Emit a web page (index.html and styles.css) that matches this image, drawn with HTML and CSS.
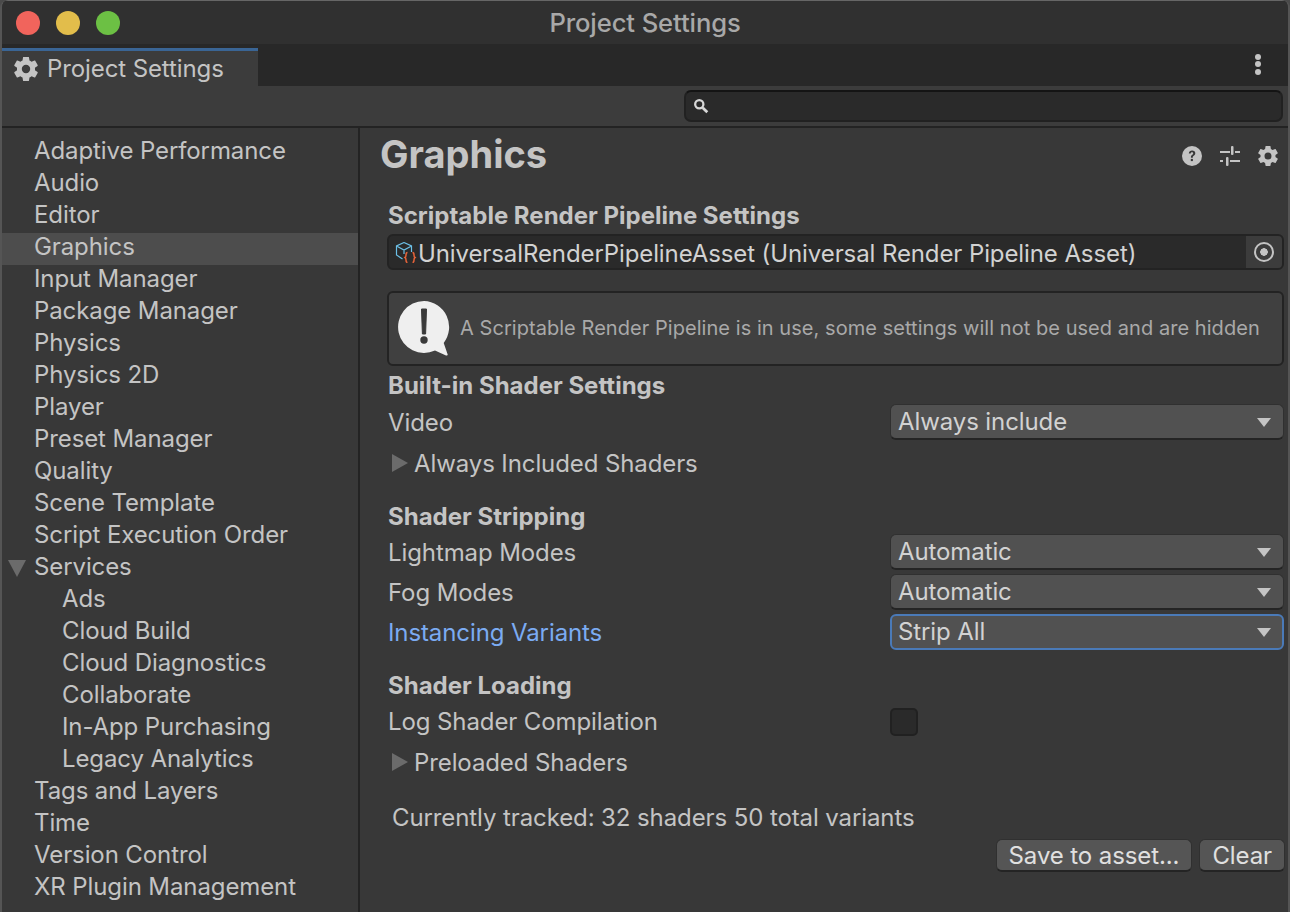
FILE: index.html
```html
<!DOCTYPE html>
<html lang="en">
<head>
  <meta charset="UTF-8" />
  <title>Project Settings</title>
  <link rel="stylesheet" href="styles.css">
</head>
<body>
  <div class="window">
    <div class="titlebar">
      <span class="light red"></span>
      <span class="light yellow"></span>
      <span class="light green"></span>
      <span class="title">Project Settings</span>
    </div>

    <div class="tabstrip">
      <div class="tab">
        <svg class="gear tab-gear" viewBox="2 2 20 20"><path d="M19.400 13c.1-.3.1-.7.1-1s0-.7-.1-1l2.200-1.600c.2-.2.300-.4.100-.7l-2-3.500c-.1-.2-.4-.3-.6-.2l-2.500 1c-.5-.4-1.100-.7-1.700-1l-.4-2.600c0-.3-.2-.4-.5-.4h-4c-.3 0-.5.100-.5.400l-.4 2.600c-.6.300-1.200.6-1.700 1l-2.500-1c-.2-.1-.5 0-.6.200l-2 3.500c-.2.300-.1.500.1.700L4.600 11c-.1.300-.1.700-.1 1s0 .7.100 1l-2.200 1.600c-.2.200-.3.400-.1.700l2 3.500c.1.200.4.300.6.200l2.500-1c.5.400 1.100.7 1.700 1l.4 2.600c0 .3.200.4.500.4h4c.3 0 .5-.1.500-.4l.4-2.600c.6-.3 1.200-.6 1.700-1l2.500 1c.2.100.5 0 .6-.2l2-3.500c.2-.3.100-.5-.1-.7zM12 15.500a3.500 3.500 0 1 1 0-7 3.500 3.500 0 0 1 0 7z"/></svg>
        <span>Project Settings</span>
      </div>
      <div class="kebab"><i></i><i></i><i></i></div>
    </div>

    <div class="toolbar">
      <div class="search">
        <svg class="search-icon" viewBox="0 0 14 14"><circle cx="5.500" cy="5.500" r="3.600" fill="none" stroke="#d8d8d8" stroke-width="2"/><path d="M8.500 8.500l4 4" stroke="#d8d8d8" stroke-width="2.400"/></svg>
      </div>
    </div>

    <div class="main">
      <nav class="sidebar">
        <div class="item">Adaptive Performance</div>
        <div class="item">Audio</div>
        <div class="item">Editor</div>
        <div class="item selected">Graphics</div>
        <div class="item">Input Manager</div>
        <div class="item">Package Manager</div>
        <div class="item">Physics</div>
        <div class="item">Physics 2D</div>
        <div class="item">Player</div>
        <div class="item">Preset Manager</div>
        <div class="item">Quality</div>
        <div class="item">Scene Template</div>
        <div class="item">Script Execution Order</div>
        <div class="item has-arrow"><span class="arrow-down"></span>Services</div>
        <div class="item sub">Ads</div>
        <div class="item sub">Cloud Build</div>
        <div class="item sub">Cloud Diagnostics</div>
        <div class="item sub">Collaborate</div>
        <div class="item sub">In-App Purchasing</div>
        <div class="item sub">Legacy Analytics</div>
        <div class="item">Tags and Layers</div>
        <div class="item">Time</div>
        <div class="item">Version Control</div>
        <div class="item">XR Plugin Management</div>
      </nav>

      <section class="content">
        <header class="page-head">
          <h1>Graphics</h1>
          <div class="head-icons">
            <svg class="head-icon" viewBox="0 0 20 20"><circle cx="10" cy="10" r="10" fill="#c4c4c4"/><path d="M6.800 7.600c.1-2 1.500-3 3.300-3 1.900 0 3.200 1.100 3.200 2.700 0 1.200-.7 1.800-1.500 2.400-.7.500-1 .8-1 1.600v.4H8.900v-.6c0-1.200.5-1.800 1.300-2.400.6-.4 1-.8 1-1.300 0-.7-.5-1.100-1.200-1.100-.8 0-1.200.500-1.300 1.300z" fill="#383838"/><rect x="8.800" y="12.900" width="2.100" height="2.200" fill="#383838"/></svg>
            <svg class="head-icon" viewBox="0 0 20 20" fill="#c4c4c4"><rect x="0" y="5" width="10" height="2"/><rect x="11" y="0" width="2.500" height="9" rx="1"/><rect x="15" y="5" width="5" height="2"/><rect x="0" y="14" width="3" height="2"/><rect x="6" y="11" width="2.500" height="9" rx="1"/><rect x="10" y="14" width="10" height="2"/></svg>
            <svg class="gear head-icon" viewBox="2 2 20 20"><path d="M19.400 13c.1-.3.1-.7.1-1s0-.7-.1-1l2.200-1.600c.2-.2.300-.4.100-.7l-2-3.500c-.1-.2-.4-.3-.6-.2l-2.500 1c-.5-.4-1.100-.7-1.700-1l-.4-2.600c0-.3-.2-.4-.5-.4h-4c-.3 0-.5.100-.5.400l-.4 2.600c-.6.300-1.200.6-1.700 1l-2.500-1c-.2-.1-.5 0-.6.200l-2 3.500c-.2.300-.1.500.1.700L4.600 11c-.1.300-.1.700-.1 1s0 .7.100 1l-2.200 1.600c-.2.200-.3.400-.1.700l2 3.500c.1.200.4.300.6.200l2.500-1c.5.400 1.100.7 1.700 1l.4 2.600c0 .3.200.4.500.4h4c.3 0 .5-.1.500-.4l.4-2.600c.6-.3 1.200-.6 1.700-1l2.500 1c.2.100.5 0 .6-.2l2-3.500c.2-.3.100-.5-.1-.7zM12 15.500a3.500 3.500 0 1 1 0-7 3.500 3.500 0 0 1 0 7z"/></svg>
          </div>
        </header>

        <div class="body">
          <h2 class="heading srp-heading">Scriptable Render Pipeline Settings</h2>
          <div class="object-field">
            <svg class="asset-icon" viewBox="0 0 22 22">
              <path d="M9 1.500l7.500 3.500v6M9 1.500L1.500 5v9l6 4M1.500 5L9 9l7.500-4M9 9v4" fill="none" stroke="#6cc1e8" stroke-width="1.200"/>
              <path d="M12.500 11.500c-1.500 0-1.500.8-1.500 2.500 0 1.500-.2 2-1 2.500.8.500 1 1 1 2.500 0 1.700 0 2.500 1.500 2.500M17.500 11.500c1.500 0 1.500.8 1.500 2.500 0 1.500.2 2 1 2.500-.8.500-1 1-1 2.500 0 1.700 0 2.500-1.500 2.500" fill="none" stroke="#e8643a" stroke-width="1.500"/>
            </svg>
            <span class="object-name">UniversalRenderPipelineAsset (Universal Render Pipeline Asset)</span>
            <span class="object-picker"><i></i></span>
          </div>

          <div class="helpbox">
            <svg class="help-icon" viewBox="0 0 54 58">
              <path d="M27 1a26 26 0 1 0 11 49.600l11 4.900c1.300.4 2-.6 1.500-1.600l-3.800-11A26 26 0 0 0 27 1z" fill="#efefef"/>
              <path d="M24.500 9h5l-.9 25h-3.200z" fill="#3a3a3a" stroke="#3a3a3a" stroke-width="1" stroke-linejoin="round"/>
              <circle cx="27" cy="40" r="3.700" fill="#3a3a3a"/>
            </svg>
            <span class="help-text">A Scriptable Render Pipeline is in use, some settings will not be used and are hidden</span>
          </div>

          <h2 class="heading builtin-heading">Built-in Shader Settings</h2>
          <div class="row">
            <span class="label">Video</span>
            <div class="dropdown">Always include</div>
          </div>
          <div class="row foldout"><span class="arrow-right"></span>Always Included Shaders</div>

          <h2 class="heading stripping-heading">Shader Stripping</h2>
          <div class="row">
            <span class="label">Lightmap Modes</span>
            <div class="dropdown">Automatic</div>
          </div>
          <div class="row">
            <span class="label">Fog Modes</span>
            <div class="dropdown">Automatic</div>
          </div>
          <div class="row">
            <span class="label focused">Instancing Variants</span>
            <div class="dropdown focus">Strip All</div>
          </div>

          <h2 class="heading loading-heading">Shader Loading</h2>
          <div class="row log-row">
            <span class="label">Log Shader Compilation</span>
            <div class="check-cell"><span class="checkbox"></span></div>
          </div>
          <div class="row foldout"><span class="arrow-right"></span>Preloaded Shaders</div>

          <p class="tracked">Currently tracked: 32 shaders 50 total variants</p>
          <div class="actions">
            <button class="btn">Save to asset...</button>
            <button class="btn">Clear</button>
          </div>
        </div>
      </section>
    </div>
  </div>
</body>
</html>
```

FILE: styles.css
```css
html, body {
  margin: 0;
  padding: 0;
  background: #4a4a4a;
}

.window {
  width: 1290px;
  height: 912px;
  overflow: hidden;
  display: flex;
  flex-direction: column;
  box-sizing: border-box;
  border-left: 2px solid #555;
  border-right: 2px solid #555;
  border-radius: 8px 8px 0 0;
  background: #383838;
  color: #c4c4c4;
  font-family: Inter, "Liberation Sans", sans-serif;
  font-size: 24px;
  letter-spacing: -0.1px;
}

/* title bar */
.titlebar {
  height: 44px;
  flex: none;
  display: flex;
  align-items: center;
  padding-left: 14px;
  gap: 16px;
  background: #303030;
  border-top: 1px solid #666;
  box-sizing: border-box;
  position: relative;
}

.light {
  width: 24px;
  height: 24px;
  border-radius: 50%;
}

.red { background: #f1645c; }
.yellow { background: #e2bd4b; }
.green { background: #6cc044; }

.title {
  position: absolute;
  left: 0;
  right: 0;
  text-align: center;
  color: #a8a8a8;
  font-size: 25.6px;
  font-weight: 500;
}

/* tabs */
.tabstrip {
  height: 42px;
  flex: none;
  display: flex;
  justify-content: space-between;
  background: #282828;
}

.tab {
  width: 256px;
  margin-top: 4px;
  box-sizing: border-box;
  border-top: 3px solid #3a6595;
  background: #3c3c3c;
  display: flex;
  align-items: center;
  padding-left: 12px;
  gap: 9px;
  color: #c4c4c4;
}

.gear { fill: #c4c4c4; }

.tab-gear {
  width: 24px;
  height: 24px;
}

.kebab {
  width: 6px;
  margin-right: 27px;
  padding-bottom: 2px;
  display: flex;
  flex-direction: column;
  justify-content: center;
  gap: 1.5px;
}

.kebab i {
  width: 6px;
  height: 6px;
  border-radius: 50%;
  background: #c4c4c4;
}

/* toolbar */
.toolbar {
  height: 42px;
  flex: none;
  box-sizing: border-box;
  background: #3c3c3c;
  border-bottom: 2px solid #232323;
  padding: 4px 5px 4px 682px;
}

.search {
  height: 32px;
  box-sizing: border-box;
  background: #2a2a2a;
  border: 2px solid #212121;
  border-top-color: #141414;
  border-radius: 7px;
  display: flex;
  align-items: center;
  padding-left: 7px;
}

.search-icon {
  width: 16px;
  height: 16px;
}

/* main split */
.main {
  flex: 1;
  display: flex;
  min-height: 0;
}

.sidebar {
  width: 358px;
  flex: none;
  box-sizing: border-box;
  border-right: 2px solid #232323;
  padding-top: 9px;
}

.item {
  height: 32px;
  line-height: 27px;
  padding-left: 32px;
  position: relative;
  white-space: nowrap;
}

.item.selected { background: #4d4d4d; }
.item.sub { padding-left: 60px; }

.arrow-down {
  position: absolute;
  left: 6px;
  top: 7px;
  border-left: 9px solid transparent;
  border-right: 9px solid transparent;
  border-top: 17px solid #6b6b6b;
}

/* content */
.content {
  flex: 1;
  min-width: 0;
  display: flex;
  flex-direction: column;
}

.page-head {
  height: 56px;
  flex: none;
  display: flex;
  align-items: center;
  justify-content: space-between;
  padding: 0 10px 0 20px;
}

h1 {
  margin: 0 0 5px;
  font-size: 38px;
  font-weight: 700;
  letter-spacing: 0;
  color: #c4c4c4;
}

.head-icons {
  display: flex;
  gap: 18px;
  align-items: center;
}

.head-icon {
  width: 20px;
  height: 20px;
}

.body {
  padding: 0 4px 0 28px;
}

.heading {
  margin: 0;
  font-size: 24px;
  font-weight: 700;
  letter-spacing: 0;
  height: 32px;
  line-height: 32px;
}

.srp-heading { margin-top: 16px; }

.object-field {
  height: 36px;
  margin: 2px 0 0 -1px;
  box-sizing: border-box;
  background: #2a2a2a;
  border: 2px solid #232323;
  border-radius: 6px;
  display: flex;
  align-items: center;
  padding-left: 6px;
  color: #d2d2d2;
}

.asset-icon {
  width: 22px;
  height: 22px;
  flex: none;
  margin-right: 1px;
}

.object-name {
  flex: 1;
  padding-top: 3px;
}

.object-picker {
  width: 36px;
  align-self: stretch;
  background: #3c3c3c;
  display: flex;
  align-items: center;
  justify-content: center;
  border-radius: 0 4px 4px 0;
}

.object-picker i {
  width: 20px;
  height: 20px;
  box-sizing: border-box;
  border: 2px solid #c4c4c4;
  border-radius: 50%;
  background: radial-gradient(circle, #c4c4c4 0 3.500px, transparent 4px);
}

.helpbox {
  height: 75px;
  margin: 21px 0 0 -1px;
  box-sizing: border-box;
  background: #404040;
  border: 2px solid #232323;
  border-radius: 6px;
  display: flex;
  align-items: center;
  padding-left: 8px;
  gap: 9px;
  font-size: 20px;
  letter-spacing: 0.05px;
  color: #a9a9a9;
  white-space: nowrap;
}

.help-text { padding-bottom: 2px; }

.help-icon {
  width: 54px;
  height: 58px;
  flex: none;
}

.builtin-heading {
  margin-top: 4px;
  height: 33px;
}

.stripping-heading { margin-top: 18px; }

.loading-heading {
  margin-top: 18px;
  line-height: 30px;
}

.row {
  height: 40px;
  display: flex;
  align-items: center;
}

.log-row { height: 39px; }

.label {
  width: 502px;
  flex: none;
  padding-bottom: 2px;
}

.label.focused { color: #7babf2; }

.dropdown {
  flex: 1;
  height: 36px;
  margin-bottom: 2px;
  box-sizing: border-box;
  background: #515151;
  border: 1px solid #303030;
  border-bottom: 2px solid #242424;
  border-radius: 6px;
  padding-left: 7px;
  line-height: 33px;
  color: #d2d2d2;
  position: relative;
}

/* dropdown arrow */
.dropdown::after {
  content: "";
  position: absolute;
  right: 12px;
  top: 13px;
  border-left: 7px solid transparent;
  border-right: 7px solid transparent;
  border-top: 9px solid #c4c4c4;
}

.dropdown.focus {
  border: 2px solid #4a7ab8;
  padding-left: 6px;
  line-height: 32px;
}

.dropdown.focus::after {
  right: 11px;
  top: 12px;
}

.check-cell {
  flex: 1;
  display: flex;
  margin-bottom: 2px;
}

.checkbox {
  width: 28px;
  height: 28px;
  box-sizing: border-box;
  background: #2a2a2a;
  border: 2px solid #212121;
  border-radius: 5px;
}

.foldout {
  padding-left: 26px;
  position: relative;
}

.arrow-right {
  position: absolute;
  left: 4px;
  top: 11px;
  border-top: 9px solid transparent;
  border-bottom: 9px solid transparent;
  border-left: 16px solid #6b6b6b;
}

.tracked {
  margin: 20px 0 0 4px;
  height: 32px;
  line-height: 32px;
}

.actions {
  display: flex;
  justify-content: flex-end;
  gap: 7px;
  margin: 5px -1px 0 0;
}

.btn {
  height: 33px;
  box-sizing: border-box;
  padding: 0 12px;
  background: #555;
  border: 1px solid #303030;
  border-bottom: 2px solid #242424;
  border-radius: 6px;
  color: #e0e0e0;
  font: inherit;
  letter-spacing: inherit;
}
```
